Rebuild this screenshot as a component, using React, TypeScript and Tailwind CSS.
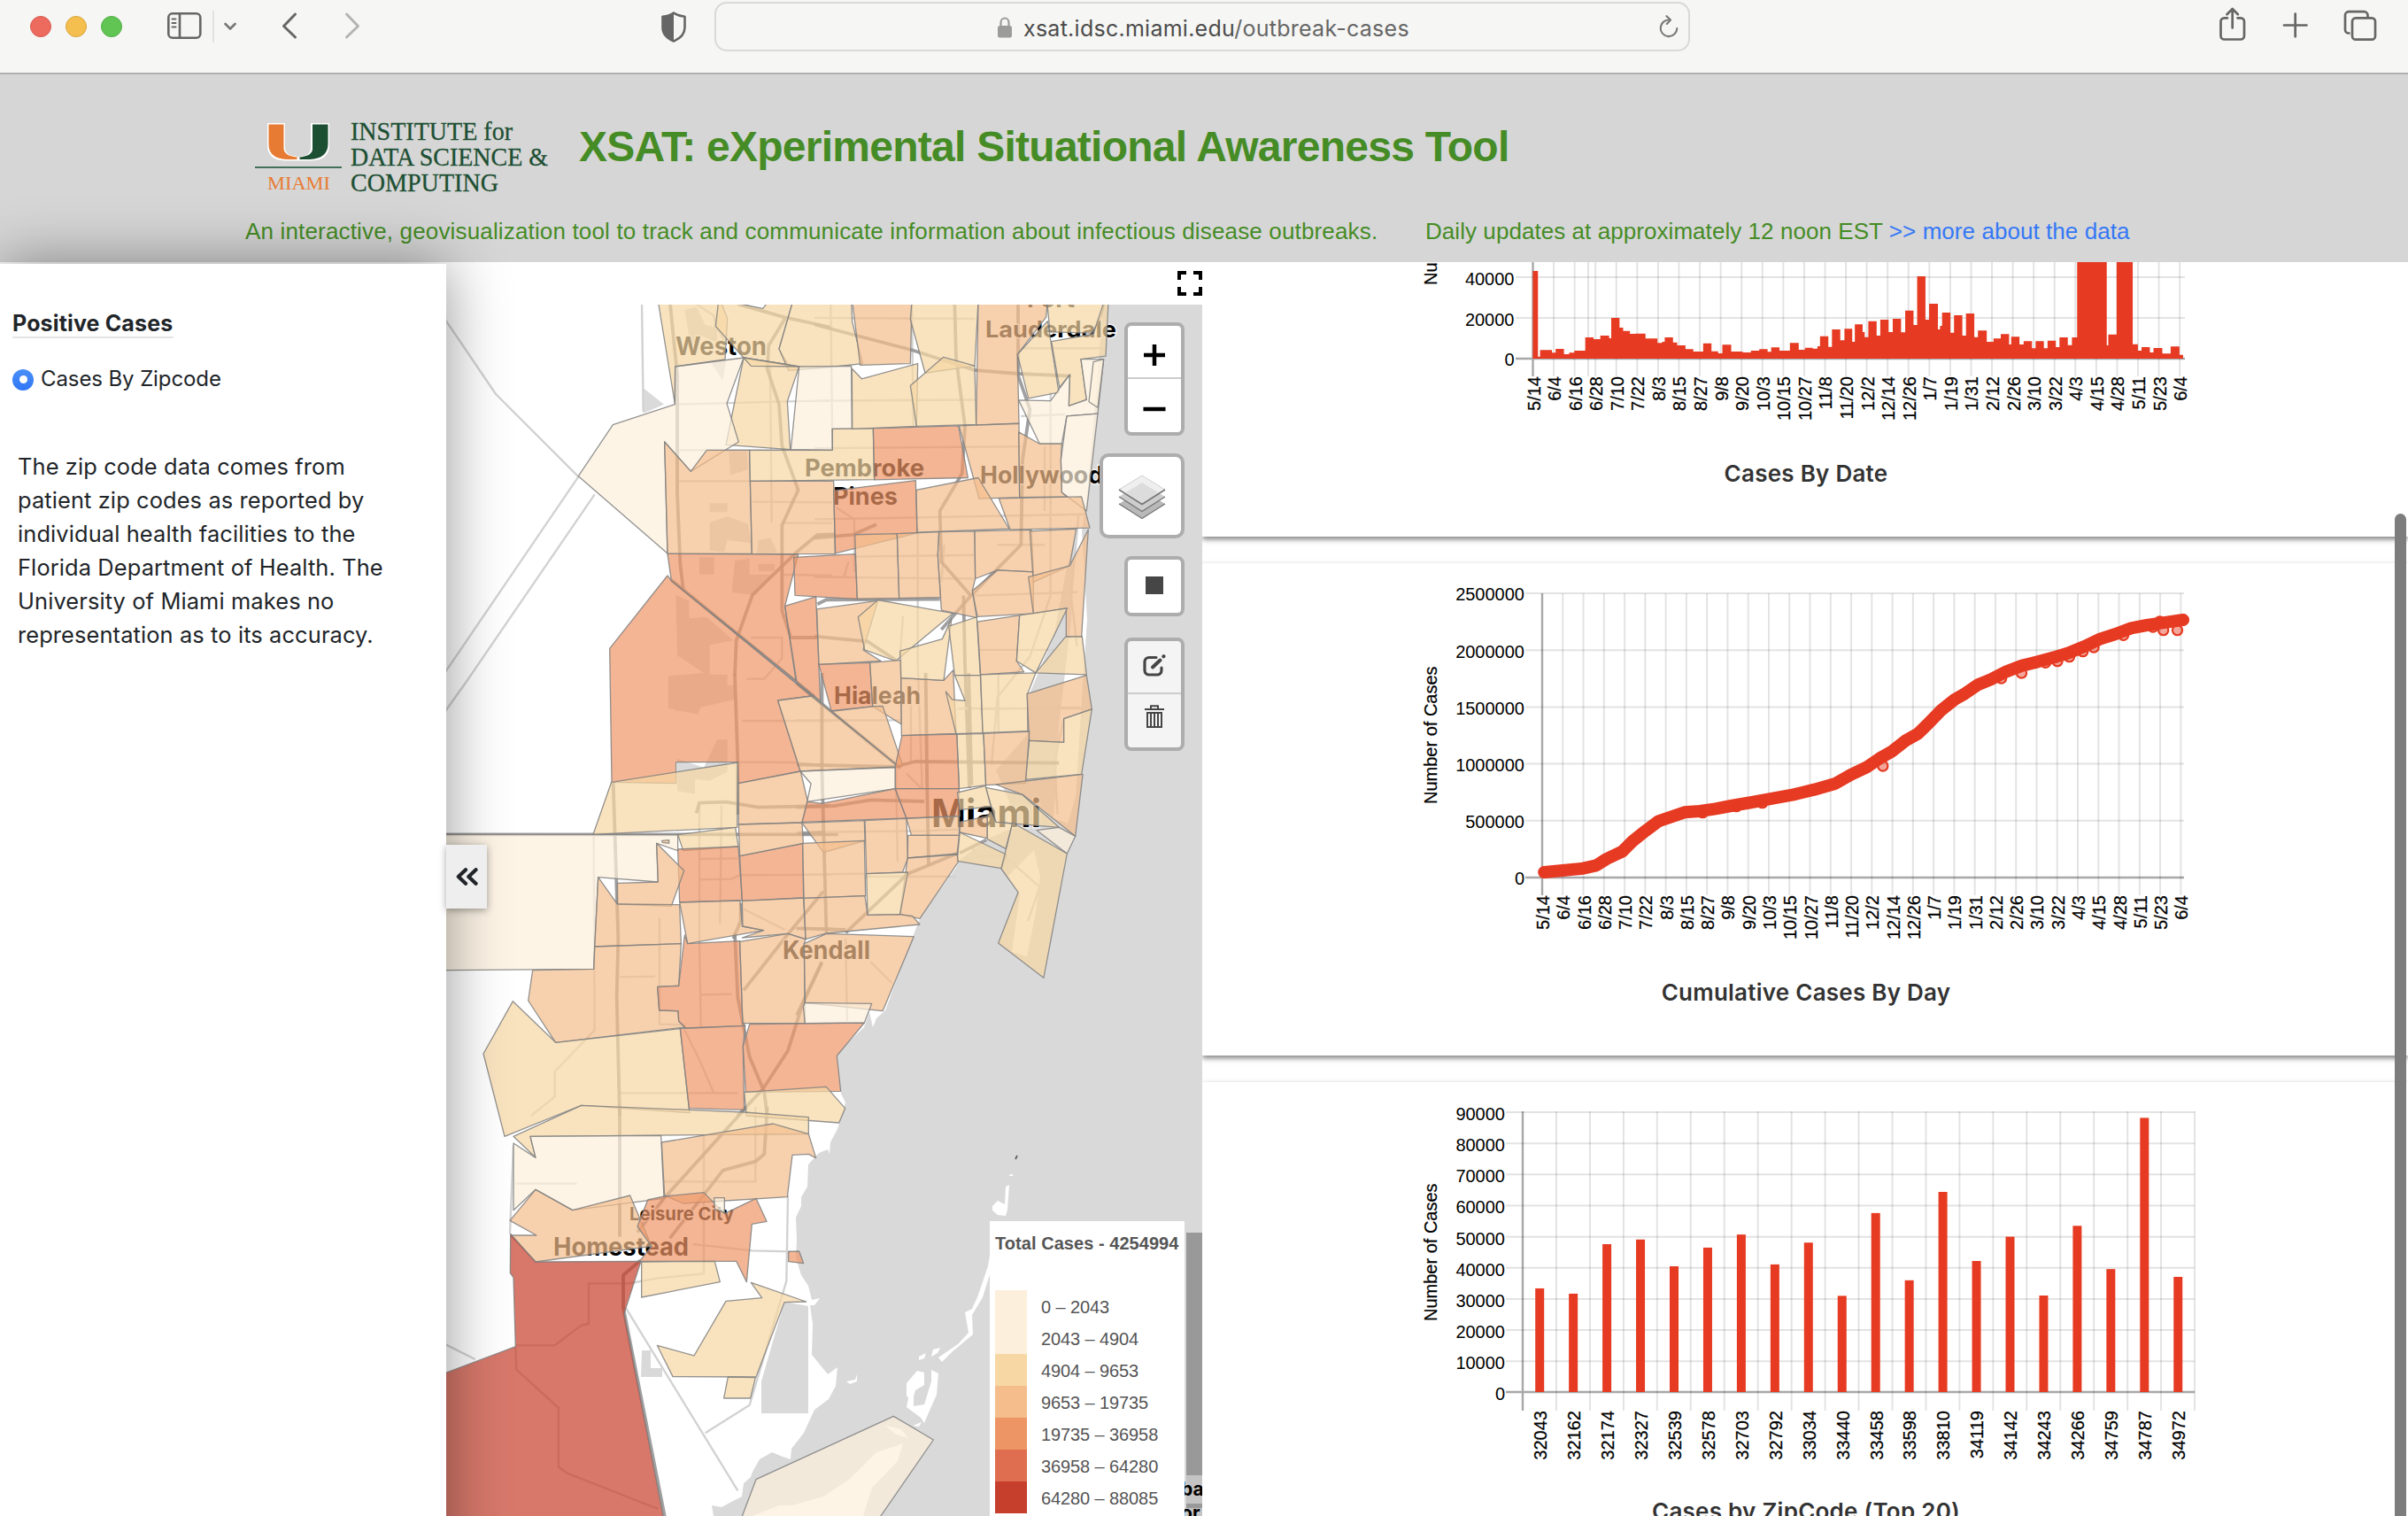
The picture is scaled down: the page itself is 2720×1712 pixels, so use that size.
import type { ReactNode } from 'react';

const TICKS = ['5/14', '6/4', '6/16', '6/28', '7/10', '7/22', '8/3', '8/15', '8/27', '9/8', '9/20', '10/3', '10/15', '10/27', '11/8', '11/20', '12/2', '12/14', '12/26', '1/7', '1/19', '1/31', '2/12', '2/26', '3/10', '3/22', '4/3', '4/15', '4/28', '5/11', '5/23', '6/4'];

const ZIPS: [string, number][] = [
  ['32043', 33300], ['32162', 31600], ['32174', 47500], ['32327', 49000], ['32539', 40400],
  ['32578', 46400], ['32703', 50600], ['32792', 41000], ['33034', 48000], ['33440', 30900],
  ['33458', 57500], ['33598', 35900], ['33810', 64300], ['34119', 42100], ['34142', 49900],
  ['34243', 31000], ['34266', 53400], ['34759', 39500], ['34787', 88085], ['34972', 37000],
];

const FILL = ['#fcefdb', '#f7d7a4', '#f4bd8b', '#ee9566', '#c63e2c'];

type Tile = { t: string; shapes: [number, string][] };

const TILES: Tile[] = [
  {
    t: 'translate(500 290) scale(.33333)',
    shapes: [
      [1, '730,150 942,150 965,210 957,348 788,372 787,498'],
      [1, '935,150 925,235 1020,342 1170,365 1140,312 1187,150 1105,150 1085,175 1000,158'],
      [1, '1187,150 1140,312 1172,385 1330,372 1423,362 1388,220 1385,150'],
      [1, '1020,342 1208,372 1168,490 1178,653 960,637'],
      [1, '1020,342 1208,372 1045,370'],
      [0, '788,372 1020,342 963,497 1003,627 841,727 752,627 762,1005 460,743 577,569 787,500'],
      [0, '1208,372 1385,370 1387,583 1320,583 1321,655 1180,653'],
      [2, '752,627 841,727 895,655 1040,655 1048,1006 762,1006'],
      [1, '1040,655 1321,655 1321,583 1459,581 1463,755 1042,760'],
      [2, '1042,760 1325,760 1330,1007 1048,1006'],
      [3, '762,1006 1205,1008 1160,1183 1197,1436 775,1097'],
      [3, '1190,1018 1398,1007 1405,1160 1194,1147'],
      [3, '1160,1183 1265,1152 1280,1505 1200,1440'],
    ],
  },
  {
    t: 'translate(920 290) scale(.33333 .38265)',
    shapes: [
      [3, '199,506 488,499 520,652 203,658'],
      [3, '65,690 343,660 348,815 71,875'],
      [2, '8,1040 215,1015 165,1160 225,1193 15,1203'],
      [1, '215,1013 470,1052 275,1193 170,1160 148,1063'],
      [3, '15,1203 188,1198 197,1327 57,1340'],
      [2, '188,1198 293,1190 295,1380 197,1327'],
      [2, '293,1243 438,1250 470,1220 480,1407 295,1413'],
      [1, '290,1163 433,1128 465,1067 438,1250 293,1243'],
      [1, '455,1090 550,1063 562,1235 475,1235'],
      [1, '562,1235 571,1405 480,1408 445,1283 467,1307 510,1310 475,1235'],
      [2, '128,130 330,130 325,315 155,320'],
      [1, '127,330 160,360 350,315 346,500 128,508'],
      [1, '330,130 555,130 543,322 375,343 325,185'],
      [1, '325,380 437,296 543,322 548,495 346,500'],
      [2, '555,130 790,130 785,178 688,288 693,492 548,496'],
      [1, '688,288 790,190 828,400 725,418'],
      [1, '788,130 985,130 972,177 940,225 798,222'],
      [1, '803,250 945,228 982,130 996,130 987,293 903,302 922,422 862,440 865,348 830,385'],
      [0, '692,423 800,425 865,348 862,440 922,422 903,302 980,302 960,463 855,470 838,552 763,552'],
      [0, '945,310 980,302 960,445 930,428'],
      [0, '855,470 960,463 922,750 838,695 835,600'],
      [2, '490,499 693,492 695,710 558,714'],
      [2, '692,517 763,552 838,552 835,600 838,695 855,708 695,710'],
      [2, '345,688 555,652 660,803 348,813'],
      [2, '625,713 905,708 933,800 663,805'],
      [2, '137,820 280,817 287,1008 145,1010'],
      [2, '280,817 422,812 418,880 428,1005 287,1008'],
      [2, '422,812 543,810 545,950 535,985 550,1065 430,1043 418,880'],
      [2, '543,810 735,806 742,930 620,925 545,950'],
      [2, '535,985 620,925 742,930 742,1053 552,1062'],
      [2, '730,810 887,803 865,912 742,960'],
      [2, '725,945 865,912 928,805 905,1122 853,1120 853,1037 742,1053'],
      [2, '552,1077 695,1058 685,1193 710,1225 563,1233'],
      [1, '695,1058 857,1037 750,1228 685,1193'],
      [1, '750,1228 850,1122 907,1120 922,1233'],
      [1, '563,1233 750,1228 722,1290 723,1400 570,1405'],
      [2, '720,1290 922,1235 940,1335 845,1363 845,1433 728,1428'],
      [1, '845,1363 940,1335 905,1527 715,1543 728,1428 845,1433'],
    ],
  },
  {
    t: 'translate(500 760) scale(.33333)',
    shapes: [
      [3, '762,-330 566,-83 573,370 791,374 791,302 1000,302 1002,374 1213,333 1136,93 1250,78 775,-313'],
      [1, '572,370 1000,303 998,523 510,547'],
      [2, '1002,374 1213,333 1237,435 1218,507 1003,513'],
      [0, '0,547 797,548 797,602 725,577 730,708 527,692 512,1003 0,1007'],
      [1, '797,548 992,523 1002,588 815,602'],
      [3, '797,597 1002,588 1015,770 803,777'],
      [2, '725,577 818,670 775,790 592,783 592,712 730,708'],
      [2, '527,692 592,783 803,785 808,917 515,927'],
      [3, '1007,620 1220,578 1223,762 1015,772'],
      [2, '1003,513 1218,507 1222,577 1007,620'],
      [2, '803,777 1008,771 1015,858 1088,872 830,917'],
      [2, '1015,772 1223,762 1230,902 1170,883 1015,897 1088,872 1017,858'],
      [2, '305,1007 512,1003 515,927 808,917 800,1060 728,1063 734,1143 798,1145 800,1180 823,1200 383,1252 290,1110'],
      [3, '820,888 830,917 1007,908 1017,1187 1025,1195 823,1203 800,1180 798,1145 734,1143 728,1063 800,1060'],
      [2, '1007,910 1170,883 1230,902 1225,917 1228,1187 1017,1187'],
      [1, '238,1112 383,1252 805,1205 837,1490 470,1465 210,1570 138,1290'],
      [3, '805,1205 1025,1195 1018,1265 1022,1480 835,1475'],
      [3, '1040,1190 1429,1185 1336,1297 1349,1417 1027,1420 1018,1265'],
      [1, '1022,1420 1300,1402 1364,1475 1343,1524 1030,1500'],
      [2, '743,568 767,566 767,577 745,574'],
    ],
  },
  {
    t: 'translate(900 760) scale(.33479 .33333)',
    shapes: [
      [2, '-64,93 50,78 345,318 12,333'],
      [2, '118,130 260,113 290,112 357,312 345,318'],
      [1, '540,208 630,205 638,380 548,392'],
      [3, '355,212 540,207 548,392 332,392 332,318'],
      [0, '12,333 332,320 332,392 35,436 48,375'],
      [3, '35,436 85,442 332,392 370,492 18,505'],
      [3, '332,392 547,392 550,485 370,492'],
      [2, '630,205 785,198 772,373 638,380'],
      [2, '672,378 965,343 940,553 762,412'],
      [1, '637,388 760,412 885,523 672,505'],
      [0, '810,533 885,523 940,553 912,612'],
      [1, '542,405 637,382 655,453 550,463'],
      [2, '550,505 643,485 643,560 550,540'],
      [1, '655,470 672,505 728,510 705,595 643,563 643,485'],
      [1, '550,540 707,615 690,662 541,637'],
      [1, '728,507 912,612 833,1033 680,915 747,743 690,663'],
      [2, '230,500 370,493 375,628 357,675 235,680'],
      [2, '370,493 548,485 548,550 387,550'],
      [2, '375,550 548,550 541,612 374,627'],
      [2, '374,627 541,615 545,640 415,832 348,818'],
      [1, '235,680 375,675 348,818 239,820'],
      [2, '18,508 228,500 230,568 90,608'],
      [2, '20,577 228,568 232,755 24,763'],
      [2, '24,763 230,755 239,820 348,818 390,823 415,852 100,882 30,902'],
      [2, '25,917 100,883 395,893 290,1145 28,1117'],
      [0, '28,1117 253,1120 228,1185 28,1187 22,1130'],
    ],
  },
  {
    t: 'translate(500 1250) scale(.33333)',
    shapes: [
      [1, '240,100 470,-5 1022,18 1240,35 1240,92 297,100 315,172'],
      [0, '240,123 315,172 297,100 740,97 750,310 440,350 315,280 240,350'],
      [2, '742,120 1120,57 1240,92 1265,173 1240,160 1185,163 1168,305 815,327 752,300'],
      [2, '315,280 440,350 635,300 708,472 315,525 230,435 318,435 228,385'],
      [3, '695,315 752,303 885,290 955,362 1062,310 1098,388 1048,397 1030,593 995,523 667,523 708,472 660,405'],
      [0, '920,308 955,308 955,358 922,346'],
      [4, '230,430 315,525 672,523 615,700 750,1400 0,1400 0,905 247,812 240,578 229,563'],
      [1, '674,525 922,523 940,593 674,645'],
      [1, '1045,595 1232,660 1158,662 1062,915 780,914 727,808 852,843 960,658 1082,647'],
      [1, '967,915 1060,917 1043,987 953,987'],
      [3, '1172,490 1208,489 1223,530 1172,524'],
      [0, '1010,1400 1062,1262 1528,1048 1663,1128 1475,1400'],
    ],
  },
];

type RoadTile = { t: string; thick: string[]; thin: string[] };

const ROADS: RoadTile[] = [
  {
    t: 'translate(500 290) scale(.33333)',
    thick: [
      '770,150 795,400 795,800 805,1040 815,1125',
      '1000,160 1160,205 1320,240',
      '1160,210 1105,300 1100,380 1140,500 1150,640 1205,790 1150,910 1150,1200 1180,1290 1270,1290',
      '1330,940 1270,942 1200,1000 1050,1145 995,1300 990,1420',
      '775,1095 1260,1490',
    ],
    thin: [
      '795,500 1168,490 1320,487', '800,655 1320,655', '800,760 1050,760', '845,150 920,200 925,235 960,290',
      '0,200 180,465 460,745 0,1420', '515,805 80,1440 0,1552', '675,150 680,525', '1150,902 1320,902',
      '1110,360 1115,900', '1050,830 1320,832', '1155,1077 1320,1080', '1045,1290 1150,1290 1150,1360 1090,1430 1030,1430',
    ],
  },
  {
    t: 'translate(920 290) scale(.33333 .38265)',
    thick: [
      '0,200 330,275 545,335 690,345 870,352', '475,140 480,300 510,500 500,640 425,750 430,900 530,1000',
      '430,1100 530,1000 700,850 705,600 730,450 690,350 690,140', '505,1000 510,1200 525,1568',
      '0,1120 180,1135 275,1190', '0,830 130,820 210,790',
      '10,1025 40,1012 425,1010',
    ],
    thin: [
      '0,180 545,183', '0,425 545,422', '0,565 700,560', '0,775 920,760', '140,885 540,880', '0,945 540,950',
      '540,1000 890,990', '560,1160 840,1160', '560,1335 900,1330', '55,140 60,510', '330,140 335,500',
      '350,800 350,1200 365,1568', '800,400 800,1000 730,1180 620,1300 600,1500', '780,560 780,750', '620,850 780,850',
      '700,270 980,270', '700,470 850,465', '0,945 100,945 115,900', '75,740 135,775 135,930', '440,850 430,960',
      '895,760 870,1000 890,1150', '300,1060 290,1180',
    ],
  },
  {
    t: 'translate(500 760) scale(.33333)',
    thick: [
      '990,0 1000,300 1000,480', '1290,740 1170,885 1020,1075', '1285,980 1220,1120 1170,1280 1085,1410 1000,1500',
      '990,880 1000,1100 1040,1300 1090,1420 1100,1500', '578,370 595,900 590,1100 600,1500',
      '860,475 870,440 960,437 1070,455 1310,450', '0,547 1340,547', '1010,780 1010,840 985,900',
    ],
    thin: [
      '870,450 870,900 875,1200', '870,700 980,698 1005,685 1320,683', '875,1090 980,1088', '1015,162 1320,162',
      '1000,302 1190,303 1320,315', '512,550 515,1210 380,1350 380,1435 300,1500', '600,1030 720,1028',
      '735,830 735,1190 820,1192', '820,1210 870,1310 920,1425', '1180,865 1320,865', '1020,800 1160,870',
      '600,1423 1000,1423', '945,450 940,850', '870,630 1000,628',
    ],
  },
  {
    t: 'translate(900 760) scale(.33479 .33333)',
    thick: [
      '85,0 85,330 95,700 100,880', '0,310 330,318 400,300 885,305', '435,0 440,400 445,650',
      '0,455 130,450 250,430 430,435', '580,0 590,380', '545,610 375,680 165,880', '0,865 165,870',
      '85,980 0,1160', '0,35 350,322', '0,545 90,540', '550,610 640,565',
    ],
    thin: [
      '0,160 350,160', '0,540 430,535 545,530', '22,683 230,680', '335,320 340,640', '545,120 960,120',
      '900,160 870,300 880,480', '700,620 820,725 780,840', '230,690 540,690', '385,50 385,300', '165,900 170,1180',
      '250,980 320,1050', '370,340 420,390', '680,0 680,200', '590,590 610,620 700,620',
    ],
  },
  {
    t: 'translate(500 1250) scale(.33333)',
    thick: ['1030,0 750,310 660,425', '1100,0 1090,160 1060,185 950,215 770,445', '600,0 600,440', '670,520 612,570 612,680 755,1400'],
    thin: [
      '848,465 1050,487 1180,490', '1170,300 1165,590 1040,1010 890,1105', '620,680 1000,1300',
      '247,812 250,890 393,1020 393,1220 420,1240 730,1362', '0,800 110,855', '245,260 455,260', '228,430 240,130',
      '620,600 730,580 885,565 885,100', '247,808 380,808 470,740 495,735 495,598 620,598', '750,253 1060,253 1060,0',
    ],
  },
];

const CITIES: [string, number, number, number, number][] = [
  ['Weston', 763, 401, 103, 28], ['Lauderdale', 1113, 381, 148, 25], ['Fort', 1160, 347, 54, 25], ['Pembroke', 909, 538, 135, 27],
  ['Pines', 941, 570, 73, 27], ['Hollywood', 1107, 546, 139, 27], ['Hialeah', 942, 795, 98, 27],
  ['Miami', 1052, 934, 124, 44], ['Kendall', 884, 1083, 99, 28], ['Leisure City', 711, 1378, 118, 20.5],
  ['Homestead', 625, 1418, 153, 28],
];

function CaseMap() {
  return (
    <svg viewBox="504 344 854 1368" className="block h-[1368px] w-[854px]">
      <rect x="504" y="344" width="854" height="1368" fill="#d9d9d9" />
      <path fill="#fff" d="M504 344H1246L1240 420 1235 480 1228 560 1205 640 1190 720 1160 790V830L1125 870 1140 905 1145 935 1120 945 1085 970 1080 980 1040 1035 1030 1060 1000 1141 990 1150 986 1160 982 1143 976 1160 945 1190 950 1235 955 1245 946 1275 938 1290 937 1303 935 1298 925 1302 913 1315 912 1340 905 1352 905 1362 899 1375 900 1400 899 1420 905 1440 913 1452 917 1468 926 1466 920 1474 915 1474 918 1495 917 1530 935 1552 946 1544 944 1565 936 1580 920 1592 908 1618 894 1636 893 1648 884 1645 872 1640 858 1648 850 1662 848 1668 840 1675 838 1690 828 1695 815 1702 804 1700 806 1712H504Z" />
      <path fill="#fff" d="M1228 560L1222 600 1228 700 1222 790 1215 900 1206 930 1190 924 1192 900 1196 820 1210 700 1215 600Z" />
      <path fill="#fff" d="M1168 960L1175 990 1170 1030 1160 1080 1143 1075 1152 1010 1138 990Z" />
      <path fill="#fff" d="M1121 1362l6-6 8 4 1-20 4-2-2 28-2 7-9-1-6-5zM1141 1326l3 0 0 2-4 0z" />
      <path fill="#fff" d="M1120 1405L1116 1430 1104 1465 1098 1478 1090 1482 1094 1505 1082 1518 1060 1533 1064 1538 1075 1527 1099 1507 1098 1485 1110 1465 1124 1420ZM1038 1532l8-4-2 6-6 2zM1054 1524l8-2-3 6-7 4zM1024 1562l12-14 8 2 0 14-10 6-4 14-6-8zM1052 1547l8 4-2 24-8 18-6 14-4-6-16-12 2-10 6-5 0 14 12-2 8-26zM1031 1610l10-4-3 5zM956 1560l10-2 2-6 0 8-8 3z" />
      <path fill="#fff" d="M895 1700L930 1690 960 1670 990 1640 1020 1630 1014 1650 985 1680 975 1712H850L880 1700ZM1000 1610l18 4 8 10-14-4z" />
      <path fill="#d9d9d9" d="M886 1470L913 1475V1596H860V1560ZM725 1525h10v20h13v10h-24z" />
      <g transform="translate(500 290) scale(.33333)" fill="#dadada">
        <path d="M680 445L750 500 680 530Z" />
        <path d="M905 835h60v30h-60zM905 900l60-20 70 25 10 65-80-10-10 40-50-5zM1070 960l40-8 25 50-70 5zM970 660h60l5 60-60 20zM870 1018h50v58h-50zM990 1030l50-8v55h80l-60 70-80-10zM1070 1040h55v25h-55zM790 1145l45 20v60l60-5 90 80-80 15v100h60v80h-80l-20 55-100-20v-110l120-10-90-60zM790 1470h80l120-20v50l-130 30-70 10zM930 1635h35v110l-60 30-50-5v50l-60-10v-110l90 30z" />
        <path d="M820 180l40-10 30 60 40 10v50l-50-20-40 30zM910 360l50-10-10 70z" />
      </g>
      {ROADS.map((r) => (
        <g key={r.t} transform={r.t} fill="none" strokeLinejoin="round">
          {r.thin.map((p) => <polyline key={p} points={p} stroke="#d2d2d2" strokeWidth="2.4" vectorEffect="non-scaling-stroke" />)}
          {r.thick.map((p) => <polyline key={p} points={p} stroke="#8f8f8f" strokeOpacity=".85" strokeWidth="3.8" vectorEffect="non-scaling-stroke" />)}
        </g>
      ))}
      <g fontFamily="Inter, sans-serif" fontWeight="700" fill="#000" stroke="#fff" strokeOpacity=".7" strokeWidth="3" paintOrder="stroke">
        {CITIES.map(([name, x, y, w, s]) => (
          <text key={name} x={x} y={y} fontSize={s} textLength={w} lengthAdjust="spacingAndGlyphs">{name}</text>
        ))}
      </g>
      {TILES.map((r) => (
        <g key={r.t} transform={r.t} fillOpacity=".7" stroke="#808080" strokeOpacity=".85" strokeWidth="1.3" strokeLinejoin="round">
          {r.shapes.map(([c, p]) => <polygon key={p} points={p} fill={FILL[c]} vectorEffect="non-scaling-stroke" />)}
        </g>
      ))}
      <path d="M1147 1309l2-4" stroke="#666" strokeWidth="2" />
      <g>
        <rect x="1340" y="1392" width="18" height="320" fill="#999" />
        <rect x="1340" y="1666" width="18" height="32" fill="#c4c4c4" />
        <rect x="1340" y="1703" width="18" height="9" fill="#c4c4c4" />
        <text x="1334" y="1689" fontFamily="Inter, sans-serif" fontWeight="700" fontSize="21">ba</text>
        <text x="1334" y="1716" fontFamily="Inter, sans-serif" fontWeight="700" fontSize="21">or</text>
      </g>
    </svg>
  );
}

const RED = '#e63a22';
const GRID = 'rgba(0,0,0,.11)';
const AXIS = 'rgba(0,0,0,.34)';

function YLabels({ x, items }: { x: number; items: [string, number][] }) {
  return (
    <g textAnchor="end">
      {items.map(([t, y]) => <text key={t} x={x} y={y + 8}>{t}</text>)}
    </g>
  );
}

function Up({ x, y, children, anchor = 'end' }: { x: number; y: number; children: ReactNode; anchor?: 'end' | 'start' }) {
  return <text transform={`translate(${x} ${y}) rotate(-90)`} textAnchor={anchor} stroke="#000" strokeWidth=".25">{children}</text>;
}

function Card({ title, children, top }: { title: string; children: ReactNode; top: number }) {
  return (
    <section className="mb-[30px] h-[556px] shrink-0 bg-white pl-[222px] shadow-[0_3px_6px_rgba(0,0,0,0.5)]">
      <svg viewBox={`1580 ${top} 920 467`} className="block h-[467px] w-[920px]" fontFamily="'Liberation Sans', Arial, sans-serif" fontSize="20" fill="#000">
        {children}
      </svg>
      <h2 className="w-[920px] text-center font-[Inter] text-[26px] leading-[36px] font-semibold tracking-[0.25px] text-[#333]">{title}</h2>
    </section>
  );
}

const STEPS = '258:48 268:338 272:316 295:325 302:312 318:330 328:325 338:318 359:273 375:279 388:267 405:276 409:207 425:240 432:251 445:261 456:260 475:277 498:292 507:288 512:273 528:290 536:300 552:313 567:321 586:293 602:320 615:327 623:298 640:321 662:324 678:318 694:313 710:322 717:307 733:318 753:292 770:315 782:308 797:311 806:303 811:269 827:305 834:246 850:283 858:244 873:288 878:229 893:255 897:272 904:218 920:267 927:213 943:255 951:210 967:256 975:182 991:231 998:66 1014:213 1021:159 1038:246 1042:234 1046:189 1062:257 1069:198 1085:267 1092:192 1108:272 1115:250 1132:288 1145:277 1159:262 1175:297 1179:271 1195:297 1203:286 1219:310 1226:286 1242:310 1249:284 1265:306 1272:273 1288:299 1296:273 1306:-60 1363:300 1366:263 1382:-60 1413:296 1423:318 1430:306 1446:324 1453:309 1470:328 1486:304 1503:332'
  .split(' ')
  .map((s) => s.split(':').map(Number));

function ByDate() {
  const xs = TICKS.map((_, i) => 1731.5 + i * 23.57);
  const d = STEPS.map(([x, y]) => `H${x}V${y}`).join('');
  return (
    <Card title="Cases By Date" top={50}>
      <g stroke={GRID} strokeWidth="2">
        {[...xs.slice(1), 1794].map((x) => <path key={x} d={`M${x} 50V425`} />)}
        <path d="M1712 359H2468M1712 313H2468" />
      </g>
      <path d="M1712 405H2468M1731.5 50V425" stroke={AXIS} strokeWidth="2.4" />
      <path transform="translate(1580 290) scale(.58673 .33333)" fill={RED} d={`M258 345${d}H1510V345Z`} />
      <YLabels x={1710.5} items={[['0', 405], ['20000', 360], ['40000', 314]]} />
      {TICKS.map((t, i) => <Up key={i} x={xs[i] + 8} y={425}>{t}</Up>)}
      <Up x={1623} y={322} anchor="start">Number of Cases</Up>
    </Card>
  );
}

const CURVE = '280,1035 320,1028 355,1022 380,1012 400,990 430,965 450,930 475,895 500,862 520,850 550,832 580,828 610,820 640,810 680,798 720,785 760,772 800,755 840,735 870,705 900,680 925,650 950,625 975,590 1000,565 1020,530 1045,485 1070,450 1090,430 1115,400 1140,382 1170,355 1200,335 1230,322 1265,305 1290,292 1320,270 1350,245 1380,228 1410,208 1440,198 1470,190 1510,180';
const DIPS = [[932, 675], [1199, 360], [1268, 320], [1245, 325], [1291, 305], [1317, 287], [1338, 273], [1472, 215], [1499, 215], [1160, 378], [1395, 232], [1452, 204], [1465, 186], [1510, 180], [280, 1035], [700, 800], [650, 812], [585, 833]];

function Cumulative() {
  const xs = TICKS.map((_, i) => 1742 + i * 23.27);
  return (
    <Card title="Cumulative Cases By Day" top={636}>
      <g stroke={GRID} strokeWidth="2">
        {xs.slice(1).map((x) => <path key={x} d={`M${x} 670V1011`} />)}
        {[0, 1, 2, 3, 4].map((i) => <path key={i} d={`M1723 ${670 + i * 64.2}H2467`} />)}
      </g>
      <path d="M1723 991H2467M1742 670V1011" stroke={AXIS} strokeWidth="2.4" />
      <g transform="translate(1580 640) scale(.58673 .33333)">
        <polyline points={CURVE} fill="none" stroke={RED} strokeWidth="14" strokeLinejoin="round" strokeLinecap="round" vectorEffect="non-scaling-stroke" />
      </g>
      {DIPS.map(([x, y]) => (
        <circle key={x} cx={1580 + x * 0.58673} cy={640 + y / 3} r="5.6" fill={RED} fillOpacity=".45" stroke={RED} strokeWidth="2.2" />
      ))}
      <YLabels x={1722} items={[['2500000', 670], ['2000000', 735], ['1500000', 799], ['1000000', 863], ['500000', 927], ['0', 991]]} />
      {TICKS.map((t, i) => <Up key={i} x={xs[i] + 8} y={1011}>{t}</Up>)}
      <Up x={1623} y={908} anchor="start">Number of Cases</Up>
    </Card>
  );
}

function ByZip() {
  return (
    <Card title="Cases by ZipCode (Top 20)" top={1222}>
      <g stroke={GRID} strokeWidth="2">
        {ZIPS.map((_, i) => <path key={i} d={`M${1758 + i * 37.95} 1255V1593`} />)}
        {ZIPS.slice(0, 9).map((_, i) => <path key={i} d={`M1701 ${1256 + i * 35.16}H2479`} />)}
      </g>
      <path d="M1701 1572H2479M1720 1255V1593" stroke={AXIS} strokeWidth="2.4" />
      {ZIPS.map(([z, v], i) => (
        <g key={z}>
          <rect x={1734.2 + i * 37.95} y={1572 - v * 0.003515} width="10" height={v * 0.003515} fill={RED} />
          <Up x={1747 + i * 37.95} y={1593}>{z}</Up>
        </g>
      ))}
      <YLabels x={1700} items={[90, 80, 70, 60, 50, 40, 30, 20, 10, 0].map((n, i) => [n ? `${n}000` : '0', 1257 + i * 35.16] as [string, number])} />
      <Up x={1623} y={1492} anchor="start">Number of Cases</Up>
    </Card>
  );
}

function Toolbar() {
  return (
    <div className="flex h-[84px] shrink-0 items-start border-b-2 border-[#b0b0b0] bg-[#f6f6f4]">
      <div className="flex h-[60px] w-[807px] items-center pl-[34px]">
        <div className="flex gap-4">
          <i className="size-6 rounded-full border border-[#d85a4f] bg-[#ed6a5e]" />
          <i className="size-6 rounded-full border border-[#dba43c] bg-[#f4bf4f]" />
          <i className="size-6 rounded-full border border-[#50ae42] bg-[#61c554]" />
        </div>
        <svg className="ml-[51px] h-9 w-[220px]" viewBox="189 12 220 36" fill="none" stroke="#666" strokeWidth="2.6" strokeLinecap="round" strokeLinejoin="round">
          <rect x="190.3" y="15.3" width="36" height="27.4" rx="4.5" />
          <path d="M203 15.5V42.5" />
          <path d="M194.5 21.5h4M194.5 26h4M194.5 30.5h4" strokeWidth="2" />
          <path d="M241 12V48" stroke="#e2e2e0" strokeWidth="2" />
          <path d="M254.5 27l5.5 5.5 5.5-5.5" stroke="#777" />
          <path d="M333.5 16L320.5 29.5 333.5 42" strokeWidth="3" />
          <path d="M391.5 16L404.5 29.5 391.5 42" stroke="#b4b4b2" strokeWidth="3" />
        </svg>
        <svg className="ml-[338px] h-9 w-7" viewBox="0 0 28 36">
          <path d="M14 2.5C10.5 5 6 6.3 1.5 6.8V19c0 7.5 5.5 12.5 12.5 15.5C21 31.5 26.5 26.5 26.5 19V6.8C22 6.3 17.5 5 14 2.5Z" fill="none" stroke="#666" strokeWidth="2.6" strokeLinejoin="round" />
          <path d="M14 2.5C10.5 5 6 6.3 1.5 6.8V19c0 7.5 5.5 12.5 12.5 15.5Z" fill="#666" />
        </svg>
      </div>
      <div className="mt-[2px] flex h-[56px] w-[1102px] items-center rounded-[14px] border-2 border-[#d9d9d7]">
        <svg className="mt-[2px] ml-[318px] h-6 w-4" viewBox="0 0 16 24">
          <rect y="10" width="16" height="13.5" rx="2.5" fill="#9b9b9a" />
          <path d="M3.5 11V6.5a4.5 5 0 0 1 9 0V11" fill="none" stroke="#9b9b9a" strokeWidth="2.2" />
        </svg>
        <span className="mt-[4px] ml-[13px] w-[717px] font-[Inter] text-[25px] leading-[49px] tracking-[0.26px] text-[#4c4c4c]">
          xsat.idsc.miami.edu<span className="text-[#666]">/outbreak-cases</span>
        </span>
        <svg className="h-[27px] w-6" viewBox="0 0 24 27" fill="none" stroke="#777" strokeWidth="2.1" strokeLinecap="round" strokeLinejoin="round">
          <path d="M12.5 5.5A9.3 9.3 0 1 0 21.3 15" />
          <path d="M9.5 1.2L14 5.6 9.8 10" />
        </svg>
      </div>
      <svg className="ml-[596px] h-[60px] w-[182px]" viewBox="2505 0 182 60" fill="none" stroke="#666" strokeWidth="2.7" strokeLinecap="round" strokeLinejoin="round">
        <path d="M2516 20.3H2512.5a4 4 0 0 0-4 4V40.5a4 4 0 0 0 4 4H2531a4 4 0 0 0 4-4V24.3a4 4 0 0 0-4-4H2527.5M2521.7 31.5V10.5M2515.5 16.2L2521.7 10 2527.9 16.2" />
        <path d="M2580 28.5H2605.5M2592.7 15.7V41.3" />
        <path d="M2653.5 37.5h-.5a4 4 0 0 1-4-4V17.2a4 4 0 0 1 4-4h17.5a4 4 0 0 1 4 4V19" />
        <rect x="2657" y="20.3" width="26" height="24.4" rx="4" />
      </svg>
    </div>
  );
}

function Header() {
  return (
    <header className="flex h-[212px] shrink-0 flex-col bg-[#d6d6d6] pl-[277px] font-['Liberation_Sans']">
      <div className="flex h-[160px]">
        <svg viewBox="277 84 377 160" className="h-[160px] w-[377px] shrink-0">
          <path d="M302 139H322V166Q322 175 331 176 336 176.5 337 178 338 176.5 343 176 351 175 351 166V139H372V164Q372 181 352 181.5H322Q302 181 302 164Z" fill="#fff" />
          <path d="M303.5 140.5H320.5V168Q321 176 335.5 177.5V180H324Q303.5 179 303.5 163Z" fill="#e77b33" />
          <path d="M353 140.5H370.5V163Q370 179 350 180H338.5V177.5Q353 176 353 168Z" fill="#1d4f33" />
          <path d="M288 189H386" stroke="#44705a" strokeWidth="2" />
          <g fontFamily="'Liberation Serif', serif">
            <text x="302" y="214" fontSize="21" fill="#e77b33" textLength="71" lengthAdjust="spacingAndGlyphs">MIAMI</text>
            <g fill="#1d4f33" stroke="#1d4f33" strokeWidth=".3" fontSize="29">
              <text x="396" y="158" textLength="183" lengthAdjust="spacingAndGlyphs">INSTITUTE for</text>
              <text x="396" y="187" textLength="223" lengthAdjust="spacingAndGlyphs">DATA SCIENCE &amp;</text>
              <text x="396" y="215.5" textLength="167" lengthAdjust="spacingAndGlyphs">COMPUTING</text>
            </g>
          </g>
        </svg>
        <h1 className="mt-[54px] text-[48px] leading-[56px] font-bold tracking-[-0.74px] whitespace-nowrap text-[#468c26]">
          XSAT: eXperimental Situational Awareness Tool
        </h1>
      </div>
      <div className="flex pt-px text-[26px] leading-[32px] tracking-[0.16px] whitespace-nowrap text-[#468c26]">
        <p className="w-[1333px]">An interactive, geovisualization tool to track and communicate information about infectious disease outbreaks.</p>
        <p className="tracking-[0.06px]">
          Daily updates at approximately 12 noon EST <a className="text-[#3478f6]">&gt;&gt; more about the data</a>
        </p>
      </div>
    </header>
  );
}

function Sidebar() {
  return (
    <aside className="relative z-10 mt-[2px] h-[1500px] w-[504px] shrink-0 bg-white px-[14px] pt-[52px] font-[Inter] text-[#212529] shadow-[0_0_64px_rgba(0,0,0,0.42)]">
      <h3 className="w-[182px] border-b-2 border-[#e4e4e4] text-[25px] leading-[30px] font-bold tracking-[0.15px] whitespace-nowrap">Positive Cases</h3>
      <label className="mt-[31px] flex h-[28px] items-center gap-[8px]">
        <span className="mt-[3px] flex size-6 items-center justify-center rounded-full bg-linear-to-b from-[#4a90f8] to-[#2f76f6]">
          <span className="size-[9px] rounded-full bg-white" />
        </span>
        <span className="mt-[2px] text-[24px] leading-[28px] tracking-[-0.1px]">Cases By Zipcode</span>
      </label>
      <p className="mt-[67px] ml-[6px] w-[430px] text-[25.4px] leading-[38px] tracking-[0.12px]">
        The zip code data comes from patient zip codes as reported by individual health facilities to the Florida Department of Health. The University of Miami makes no representation as to its accuracy.
      </p>
      <button className="absolute top-[656px] left-[504px] flex h-[72px] w-[46px] items-center justify-center bg-[#eeeeee] shadow-[0_2px_8px_rgba(0,0,0,0.35)]">
        <svg className="h-5 w-[25px]" viewBox="0 0 25 20" fill="none" stroke="#212529" strokeWidth="4.2" strokeLinecap="round" strokeLinejoin="round">
          <path d="M11 2.2L2.8 10 11 17.8M22.5 2.2L14.3 10 22.5 17.8" />
        </svg>
      </button>
    </aside>
  );
}

function Controls() {
  return (
    <div className="absolute top-[68px] right-[20px] flex flex-col items-end">
      <div className="flex h-[128px] w-[68px] flex-col rounded-lg border-4 border-[#adadad] bg-white">
        <div className="flex h-[60px] items-center justify-center border-b-2 border-[#ccc] pt-[8px]">
          <svg className="size-[26px]" viewBox="0 0 26 26"><path d="M13 1V25M1 13H25" stroke="#000" strokeWidth="4.5" /></svg>
        </div>
        <div className="flex flex-1 items-center justify-center pt-[7px]">
          <svg className="size-[26px]" viewBox="0 0 26 26"><path d="M.5 13H25.5" stroke="#000" strokeWidth="4.5" /></svg>
        </div>
      </div>
      <div className="mt-[20px] flex h-[96px] w-[96px] items-center justify-center rounded-[10px] border-4 border-[#adadad] bg-white pt-[3px]">
        <svg className="h-[52px] w-[54px]" viewBox="0 0 54 52">
          <path d="M1 33L27 17 53 33 27 49Z" fill="#b9b9b9" />
          <path d="M1 33L27 49.5 53 33" fill="none" stroke="#747474" strokeWidth="1.3" />
          <path d="M1 25L27 9 53 25 27 41Z" fill="#cdcdcd" />
          <path d="M1 25L27 41.5 53 25" fill="none" stroke="#747474" strokeWidth="1.3" />
          <path d="M1 17L27 1 53 17 27 33Z" fill="#efefef" stroke="#c4c4c4" strokeWidth=".8" />
          <path d="M14 17L27 9 40 17 46 20.5 27 32.5 8 20.5Z" fill="#dcdcdc" />
          <path d="M1 17L27 33.5 53 17" fill="none" stroke="#747474" strokeWidth="1.5" />
        </svg>
      </div>
      <div className="mt-[20px] flex h-[68px] w-[68px] items-center justify-center rounded-lg border-4 border-[#adadad] bg-white">
        <span className="mb-[2px] h-[20px] w-[20px] bg-[#464646]" />
      </div>
      <div className="mt-[24px] flex h-[128px] w-[68px] flex-col rounded-lg border-4 border-[#adadad] bg-[#f4f4f4]">
        <div className="flex h-[60px] items-center justify-center border-b-2 border-[#ccc] pb-[4px]">
          <svg className="size-[26px]" viewBox="0 0 26 26" fill="none" stroke="#464646" strokeWidth="3.2" strokeLinecap="round">
            <path d="M15 4.5H7a5 5 0 0 0-5 5V19a5 5 0 0 0 5 5H16a5 5 0 0 0 5-5V16" />
            <path d="M11 15.5L19.5 7.5" strokeWidth="4" />
            <path d="M23.3 3.3l.2-.2" strokeWidth="4" />
          </svg>
        </div>
        <div className="flex flex-1 items-center justify-center pb-[10px]">
          <svg className="h-[26px] w-[22px]" viewBox="0 0 22 26" fill="none" stroke="#464646" strokeWidth="2">
            <path d="M0 5H22M7 4.5V1.2H15V4.5M3 9V25H19V9ZM7 9V25M11 9V25M15 9V25" />
          </svg>
        </div>
      </div>
    </div>
  );
}

const LEGEND: [string, string][] = [
  ['#fcefdb', '0 – 2043'], ['#fcefdb', '2043 – 4904'], ['#f7d7a4', '4904 – 9653'], ['#f4bd8b', '9653 – 19735'],
  ['#ee9566', '19735 – 36958'], ['#df6e50', '36958 – 64280'], ['#c63e2c', '64280 – 88085'],
];

export default function App() {
  return (
    <div className="flex h-[1712px] w-[2720px] flex-col overflow-hidden bg-white">
      <Toolbar />
      <Header />
      <main className="flex h-[1416px] shrink-0">
        <Sidebar />
        <div className="relative h-[1416px] w-[854px] shrink-0 bg-white">
          <div className="flex h-[48px] justify-end pt-[10px]">
            <svg className="h-[28px] w-[28px]" viewBox="0 0 28 28" fill="none" stroke="#000" strokeWidth="4"><path d="M10 2H2V10M18 2H26V10M26 18V26H18M10 26H2V18" /></svg>
          </div>
          <CaseMap />
          <Controls />
          <div className="absolute top-[1083px] left-[614px] h-[333px] w-[220px] bg-white pl-[6px] font-['Liberation_Sans'] text-[20px] text-[#555]">
            <p className="mt-[13px] mb-[41px] leading-[24px] font-bold tracking-[0.05px] whitespace-nowrap">Total Cases - 4254994</p>
            {LEGEND.map(([c, t]) => (
              <div key={t} className="flex h-[36px] items-center gap-[16px]">
                <span className="h-[36px] w-[36px]" style={{ backgroundColor: c }} />
                <span className="pt-[2px] leading-[34px] tracking-[-0.1px]">{t}</span>
              </div>
            ))}
          </div>
        </div>
        <div className="relative h-[1416px] w-[1362px] shrink-0 overflow-hidden bg-white">
          <div className="-mt-[246px] flex flex-col">
            <ByDate />
            <Cumulative />
            <ByZip />
          </div>
          <div className="absolute top-[284px] right-[2px] h-[1160px] w-[13px] rounded-t-full bg-[#7d7d7d]" />
        </div>
      </main>
    </div>
  );
}
